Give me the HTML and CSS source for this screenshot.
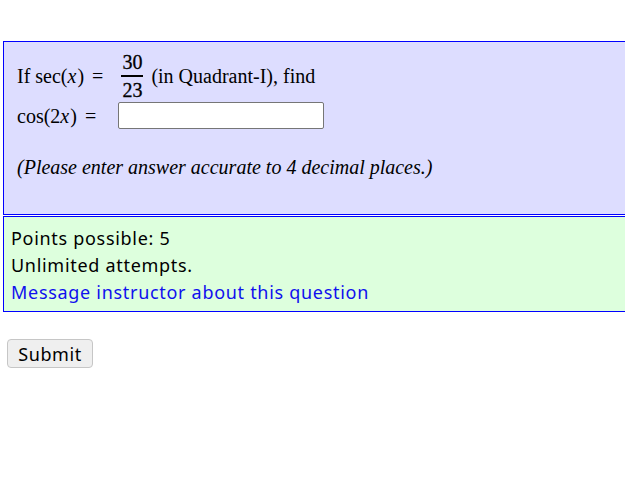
FILE: index.html
```html
<!DOCTYPE html>
<html>
<head>
<meta charset="utf-8">
<link rel="stylesheet" href="styles.css">
</head>
<body>
<div class="page">
  <div class="question">
    <div class="row row-one">
      <span class="m">If sec(<i>x</i>)<span class="op">=</span></span>
      <span class="frac"><span class="num">30</span><span class="bar"></span><span class="den">23</span></span>
      <span class="txt">(in Quadrant-I), find</span>
    </div>
    <div class="row row-two">
      <span class="m">cos(2<i>x</i>)<span class="op">=</span></span>
      <input class="answer" type="text">
    </div>
    <p class="note">(Please enter answer accurate to 4 decimal places.)</p>
  </div>
  <div class="info">
    <div class="line">Points possible: 5</div>
    <div class="line">Unlimited attempts.</div>
    <div class="line"><a class="link" href="#">Message instructor about this question</a></div>
  </div>
  <button class="submit" type="button">Submit</button>
</div>
</body>
</html>
```
FILE: styles.css
```css
html, body {
  margin: 0;
  padding: 0;
  overflow: hidden;
  background: #ffffff;
}
.page {
  padding: 41px 0 0 3px;
  font-family: "Noto Sans", "Open Sans", sans-serif;
}
.question {
  width: 720px;
  box-sizing: border-box;
  border: 1px solid #0000ff;
  background: #ddddff;
  padding: 10px 13px 36px 13px;
  font-family: "Liberation Serif", "Times New Roman", serif;
  font-size: 20px;
  color: #000;
}
.row {
  display: flex;
  align-items: center;
  line-height: 22px;
}
.row-one {
  height: 48px;
}
.row-two {
  height: 31px;
}
.m i {
  font-style: italic;
  padding-right: 1px;
}
.op {
  margin: 0 7px 0 8px;
}
.frac {
  display: inline-flex;
  flex-direction: column;
  align-items: center;
  margin: 0 8px 0 11px;
}
.num, .den {
  line-height: 20px;
  -webkit-text-stroke: 0.3px #000;
}
.bar {
  width: 22px;
  height: 2px;
  background: #000;
  margin: 3px 0 3px 0;
}
.answer {
  width: 206px;
  height: 27px;
  box-sizing: border-box;
  margin-left: 15px;
  border: 1px solid #767676;
  border-radius: 2px;
  background: #fff;
  padding: 0 4px;
}
.note {
  margin: 25px 0 0 0;
  font-style: italic;
  font-size: 20px;
  line-height: 22px;
}
.info {
  width: 720px;
  box-sizing: border-box;
  margin-top: 1px;
  border: 1px solid #0000ff;
  background: #ddffdd;
  padding: 8px 7px 5px 7px;
  font-size: 18px;
  letter-spacing: 0.7px;
  color: #000;
}
.line {
  line-height: 27px;
  height: 27px;
  white-space: nowrap;
}
.link {
  color: #1010ee;
  text-decoration: none;
}
.submit {
  display: block;
  margin: 27px 0 0 4px;
  width: 86px;
  height: 29px;
  box-sizing: border-box;
  font-family: "Noto Sans", "Open Sans", sans-serif;
  font-size: 18px;
  letter-spacing: 0.6px;
  line-height: 1;
  color: #000;
  background: #efefef;
  border: 1px solid #c6c6c6;
  border-radius: 4px;
  padding: 0;
}
```
